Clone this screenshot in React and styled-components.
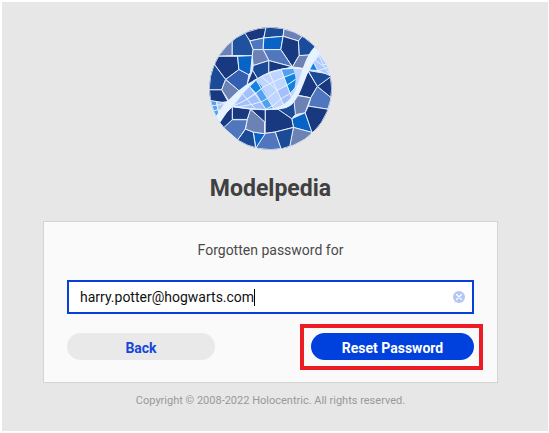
import { useEffect, useRef, useState } from "react";
import styled, { createGlobalStyle } from "styled-components";

const TILES = [
  ["#183880", "150,50 230,40 230,52 221,83 180,92 163,72"],
  ["#1b4b96", "230,40 284,40 280,78 222,83"],
  ["#6c82b5", "284,45 350,60 340,76 326,92 280,78"],
  ["#1b4b9c", "326,92 340,74 395,110 358,135 328,136"],
  ["#6c82b5", "84,138 80,110 127,80 127,136"],
  ["#1f519f", "127,136 127,80 163,65 180,92 190,118 187,136"],
  ["#5077be", "180,92 221,83 220,118 190,118"],
  ["#0863c6", "222,83 280,78 273,118 220,118"],
  ["#183880", "280,78 326,92 328,136 308,170 273,118"],
  ["#6c82b5", "328,136 358,134 345,175 308,170"],
  ["#5077be", "220,118 273,118 308,170 237,151"],
  ["#6c82b5", "190,118 220,118 237,151 190,166 187,136"],
  ["#1b4b96", "190,166 237,151 237,187 205,210 188,180"],
  ["#183880", "237,151 308,170 237,187"],
  ["#183880", "188,180 206,210 170,225"],
  ["#183880", "70,138 143,138 147,178 107,208 75,165"],
  ["#0863c6", "143,138 187,136 182,187 175,194 147,178"],
  ["#325fb0", "147,178 177,194 172,222 150,245 107,208"],
  ["#1b4b96", "75,165 107,208 95,239 45,239 50,155"],
  ["#6c82b5", "107,208 150,244 118,274 95,239"],
  ["#183880", "45,239 95,239 114,274 90,278 50,270"],
  ["#183880", "355,183 383,229 363,263 320,254"],
  ["#1b4b96", "355,181 435,194 383,229"],
  ["#183880", "424,199 440,210 430,268 383,229"],
  ["#5077be", "383,229 430,267 425,299 356,288 363,263"],
  ["#183880", "356,288 425,299 400,350 366,368 346,308"],
  ["#6c82b5", "310,254 363,263 346,308 315,314 310,285"],
  ["#1b4b96", "262,297 313,275 317,313 306,326"],
  ["#0863c6", "306,326 346,308 367,368 311,352"],
  ["#183880", "226,297 264,297 306,326 311,352 256,366 226,370"],
  ["#6c82b5", "311,352 367,367 340,410 297,418"],
  ["#1b4b96", "256,366 311,352 297,425 276,425"],
  ["#5077be", "226,370 256,366 277,425 195,425 198,412"],
  ["#0863c6", "190,366 226,371 198,414"],
  ["#1b4b96", "167,357 190,366 199,425 135,400 145,387"],
  ["#6c82b5", "182,297 224,335 224,371 190,366 167,357 172,328"],
  ["#183880", "182,297 226,297 226,337"],
  ["#183880", "127,290 182,297 172,328 127,328"],
  ["#5077be", "127,329 172,329 166,357 143,390 100,352"],
  ["#183880", "127,290 127,329 101,353 85,332"],
];

const LIGHT_TILES = [
  ["#52a1ef", "55,270 79,274 84,300 68,305"],
  ["#abc9ff", "79,274 105,278 92,300 84,300"],
  ["#52a1ef", "65,305 84,298 86,313 74,323"],
  ["#abc9ff", "371,156 390,133 425,180 421,196 383,180"],
  ["#1183dc", "371,156 384,181 359,179"],
];

const LENS_LINES = [
  "M157 250L198 299",
  "M179 228L230 300",
  "M199 210L253 298",
  "M238 187L284 290",
  "M274 178L306 264",
  "M130 288L165 271L199 248L218 232L252 214L284 201L314 189",
  "M140 291L186 283L217 274L234 264L262 241L292 225L318 207",
  "M172 267L200 249",
  "M228 297L252 285L274 266L302 249L322 226",
  "M218 202L262 240",
];

function Logo() {
  return (
    <LogoImage viewBox="57 50 370 370" role="img" aria-label="Modelpedia">
      <defs>
        <clipPath id="globe">
          <circle cx="242" cy="235" r="184" />
        </clipPath>
        <clipPath id="lens">
          <path d="M132 288C160 245 197 207 237 186C272 172 315 170 355 178C335 205 330 255 290 288C250 303 178 298 132 288Z" />
        </clipPath>
      </defs>
      <g clipPath="url(#globe)">
        <circle cx="242" cy="235" r="185" fill="#dce9fc" />
        <g stroke="#e6effc" strokeWidth="3" strokeLinejoin="round">
          {TILES.map(([fill, points]) => (
            <polygon key={points} fill={fill} points={points} />
          ))}
          {LIGHT_TILES.map(([fill, points]) => (
            <polygon key={points} fill={fill} points={points} />
          ))}
        </g>
        <g stroke="#e6effc" strokeWidth="3" fill="none">
          <path d="M375 149L397 165L426 158M386 133L405 172L421 196M384 181L425 169M62 287L84 285L101 280" />
        </g>
        <g clipPath="url(#lens)">
          <rect x="120" y="160" width="250" height="150" fill="#bdd5ff" />
          <polygon fill="#a3c0fb" points="130,290 157,250 179,228 230,300" />
          <polygon fill="#1183dc" points="179,228 199,210 218,232 199,248" />
          <polygon fill="#52a1ef" points="199,248 218,236 253,298 230,300" />
          <polygon fill="#a3c0fb" points="262,241 292,225 306,264 284,290" />
          <polygon fill="#52a1ef" points="274,176 309,173 314,189 284,201" />
          <polygon fill="#1183dc" points="284,201 314,189 318,207 292,225" />
          <polygon fill="#1183dc" points="292,225 318,207 314,236 302,249" />
          <g stroke="#eaf3ff" strokeWidth="3" fill="none">
            {LENS_LINES.map((d) => (
              <path key={d} d={d} />
            ))}
          </g>
        </g>
        <g fill="none" stroke="#e6f2ff">
          <path strokeWidth="4" d="M190 214C237 181 290 164 359 179" />
          <path strokeWidth="4" d="M130 289C170 296 230 303 275 294" />
        </g>
        <path
          fill="#e6f2ff"
          d="M75 323C105 275 148 231 205 203C165 234 119 293 91 337Z"
        />
        <path
          fill="#e6f2ff"
          d="M376 108L393 125C345 176 346 243 306 284C286 301 255 299 235 297C271 293 293 279 311 252C333 214 338 145 376 108Z"
        />
        <circle
          cx="242"
          cy="235"
          r="184"
          fill="none"
          stroke="#e2ebf8"
          strokeWidth="3"
        />
      </g>
    </LogoImage>
  );
}

function App() {
  const [email, setEmail] = useState("harry.potter@hogwarts.com");
  const inputRef = useRef(null);

  useEffect(() => {
    const input = inputRef.current;
    input.focus();
    input.setSelectionRange(input.value.length, input.value.length);
  }, []);

  function clearEmail() {
    setEmail("");
    inputRef.current.focus();
  }

  return (
    <>
      <GlobalStyle />
      <Page>
        <Logo />
        <Title>Modelpedia</Title>
        <Card onSubmit={(e) => e.preventDefault()}>
          <Label htmlFor="email">Forgotten password for</Label>
          <Field onClick={() => inputRef.current.focus()}>
            <Input
              id="email"
              ref={inputRef}
              type="text"
              autoComplete="off"
              spellCheck={false}
              value={email}
              onChange={(e) => setEmail(e.target.value)}
            />
            <Caret />
            <ClearButton type="button" aria-label="Clear" onClick={clearEmail}>
              <svg viewBox="0 0 12 12" width="12" height="12">
                <circle cx="6" cy="6" r="6" fill="#b3c6f5" />
                <path
                  d="M3.5 3.5L8.5 8.5M8.5 3.5L3.5 8.5"
                  stroke="#ffffff"
                  strokeWidth="1.3"
                  strokeLinecap="round"
                />
              </svg>
            </ClearButton>
          </Field>
          <Actions>
            <Button type="button">Back</Button>
            <Highlight>
              <Button type="submit" $primary>
                Reset Password
              </Button>
            </Highlight>
          </Actions>
        </Card>
        <Copyright>
          Copyright © 2008-2022 Holocentric. All rights reserved.
        </Copyright>
      </Page>
    </>
  );
}

export default App;

const GlobalStyle = createGlobalStyle`
  * {
    box-sizing: border-box;
  }
  body {
    margin: 0;
    padding: 2px 1px 2px 2px;
    background: #ffffff;
    font-family: Roboto, "Liberation Sans", sans-serif;
  }
`;

const Page = styled.main`
  min-height: calc(100vh - 4px);
  padding: 25px 50px 20px 41px;
  display: flex;
  flex-direction: column;
  align-items: center;
  background: #e7e7e7;
`;

const LogoImage = styled.svg`
  width: 123px;
  height: 123px;
`;

const Title = styled.h1`
  margin: 24px 0 18px;
  font-weight: 700;
  font-size: 23px;
  line-height: 29px;
  color: #404040;
`;

const Card = styled.form`
  width: 100%;
  padding: 18px 23px 22px;
  display: flex;
  flex-direction: column;
  background: #fafafa;
  border: 1px solid #d4d4d4;
`;

const Label = styled.label`
  font-size: 14px;
  line-height: 20px;
  text-align: center;
  color: #4a4a4a;
`;

const Field = styled.div`
  margin: 20px 0 19px;
  height: 34px;
  padding: 0 7px 0 11px;
  display: flex;
  align-items: center;
  background: #ffffff;
  border: 2px solid #0540dc;
  cursor: text;
`;

const Input = styled.input`
  field-sizing: content;
  min-width: 0;
  height: 100%;
  padding: 0;
  border: none;
  outline: none;
  background: transparent;
  caret-color: transparent;
  font-family: inherit;
  font-size: 14px;
  color: #111111;
`;

const Caret = styled.span`
  flex: none;
  width: 1px;
  height: 17px;
  background: #000000;
  visibility: hidden;
  ${Input}:focus + & {
    visibility: visible;
  }
`;

const ClearButton = styled.button`
  margin-left: auto;
  padding: 0;
  display: flex;
  border: none;
  background: none;
  cursor: pointer;
`;

const Actions = styled.div`
  display: flex;
  justify-content: space-between;
`;

const Highlight = styled.div`
  position: relative;
  display: flex;
  &::after {
    content: "";
    position: absolute;
    inset: -9px -9px -10px -11px;
    border: 4px solid #ed1c24;
    pointer-events: none;
  }
`;

const Button = styled.button`
  width: ${({ $primary }) => ($primary ? "163px" : "148px")};
  height: 27px;
  padding: 2px 0 0;
  border: none;
  border-radius: 14px;
  background: ${({ $primary }) => ($primary ? "#0040dd" : "#e9e9e9")};
  color: ${({ $primary }) => ($primary ? "#ffffff" : "#1747d8")};
  font-family: inherit;
  font-weight: 700;
  font-size: 14px;
  cursor: pointer;
`;

const Copyright = styled.p`
  margin: 10px 0 0;
  font-size: 11px;
  line-height: 16px;
  color: #999999;
`;
